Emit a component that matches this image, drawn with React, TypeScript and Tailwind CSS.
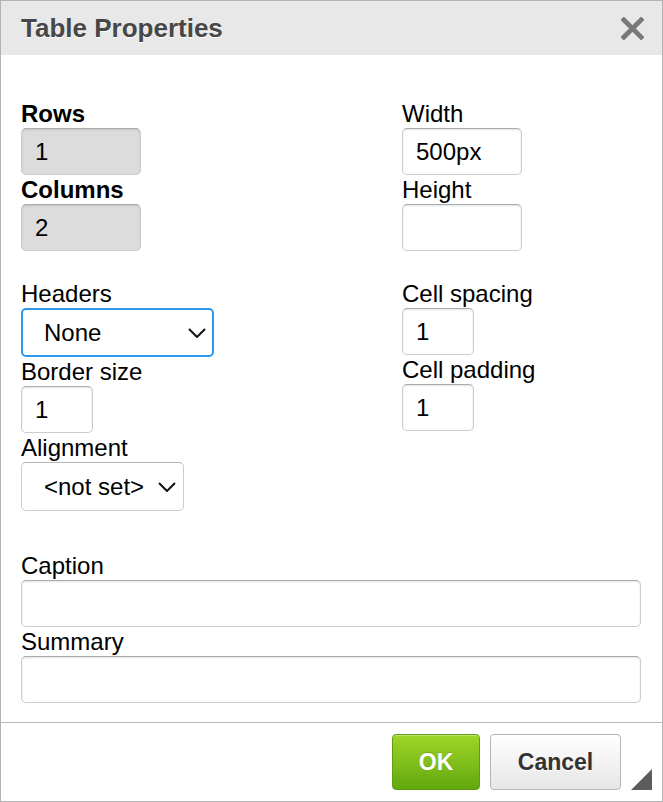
import React from 'react';

const font = { fontFamily: '"Liberation Sans", Arial, sans-serif' };

const inputBase =
  'block h-[47px] rounded-[5px] border border-[#c9ccd0] border-t-[#a9adb2] shadow-[inset_0_1px_2px_rgba(0,0,0,0.12)] px-[13px] text-[24px] text-black outline-none';

const Label = ({ children, bold }: { children: React.ReactNode; bold?: boolean }) => (
  <label className={`block text-[24px] leading-[29px] text-black ${bold ? 'font-bold' : ''}`}>{children}</label>
);

const TextField = ({ value = '', width, gray }: { value?: string; width: string; gray?: boolean }) => (
  <input
    type="text"
    defaultValue={value}
    readOnly={gray}
    className={`${inputBase} ${width} ${gray ? 'bg-[#dcdcdc]' : 'bg-white'}`}
    style={font}
  />
);

const Chevron = () => (
  <svg width="18" height="10" viewBox="0 0 18 10" className="pointer-events-none absolute right-[8px] top-[20px]">
    <path d="M1 1 L9 9 L17 1" fill="none" stroke="#111" strokeWidth="2" />
  </svg>
);

const Select = ({ value, width, focused }: { value: string; width: string; focused?: boolean }) => (
  <div className={`relative ${width}`}>
    <select
      defaultValue={value}
      className={`block h-[49px] w-full appearance-none rounded-[5px] bg-white pl-[21px] text-[24px] text-black outline-none ${
        focused ? 'border-2 border-[#2b97ef]' : 'border border-[#c9ccd0] border-t-[#b3b7bb] pl-[22px]'
      }`}
      style={font}
    >
      <option>{value}</option>
    </select>
    <Chevron />
  </div>
);

const App = () => {
  return (
    <div className="h-[802px] w-[663px] bg-white" style={font}>
      <div className="flex h-full flex-col border border-[#b3b3b3]">
        {/* title bar */}
        <div className="flex h-[54px] items-center justify-between bg-[#e8e8e8] pl-[20px] pr-[18px]">
          <h1 className="text-[26px] font-bold text-[#474747] [text-shadow:0_1px_0_#fff]">Table Properties</h1>
          <svg width="23" height="23" viewBox="0 0 24 24" className="mt-[1px] opacity-90">
            <path d="M3 3 L21 21 M21 3 L3 21" stroke="#6e6e6e" strokeWidth="5" strokeLinecap="square" />
          </svg>
        </div>

        {/* body */}
        <div className="flex-1 pl-[20px] pr-[21px] pt-[44px]">
          <div className="grid grid-cols-[381px_1fr]">
            <div>
              <Label bold>Rows</Label>
              <TextField value="1" width="w-[120px]" gray />
              <Label bold>Columns</Label>
              <TextField value="2" width="w-[120px]" gray />

              <div className="mt-[28px]">
                <Label>Headers</Label>
                <Select value="None" width="w-[193px]" focused />
                <Label>Border size</Label>
                <TextField value="1" width="w-[72px]" />
                <Label>Alignment</Label>
                <Select value="<not set>" width="w-[163px]" />
              </div>
            </div>
            <div>
              <Label>Width</Label>
              <TextField value="500px" width="w-[120px]" />
              <Label>Height</Label>
              <TextField width="w-[120px]" />

              <div className="mt-[28px]">
                <Label>Cell spacing</Label>
                <TextField value="1" width="w-[72px]" />
                <Label>Cell padding</Label>
                <TextField value="1" width="w-[72px]" />
              </div>
            </div>
          </div>

          <div className="mt-[40px]">
            <Label>Caption</Label>
            <TextField width="w-full" />
            <Label>Summary</Label>
            <TextField width="w-full" />
          </div>
        </div>

        {/* footer */}
        <div className="relative flex h-[79px] items-start justify-end gap-[10px] border-t border-[#b8b8b8] pr-[41px] pt-[11px]">
          <button className="h-[56px] w-[88px] rounded-[4px] border border-[#5e9c12] bg-gradient-to-b from-[#9fd626] to-[#62a80f] text-[23px] font-bold text-white shadow-[inset_0_1px_0_rgba(255,255,255,0.35)] [text-shadow:0_-1px_0_rgba(0,0,0,0.15)]">
            OK
          </button>
          <button className="h-[56px] w-[131px] rounded-[4px] border border-[#b6b6b6] bg-gradient-to-b from-white to-[#e6e6e6] text-[23px] font-bold text-[#333] [text-shadow:0_1px_0_#fff]">
            Cancel
          </button>
          <svg width="21" height="21" viewBox="0 0 21 21" className="absolute bottom-[11px] right-[10px]">
            <polygon points="21,0 21,21 0,21" fill="#5c5c5c" />
          </svg>
        </div>
      </div>
    </div>
  );
};

export default App;
